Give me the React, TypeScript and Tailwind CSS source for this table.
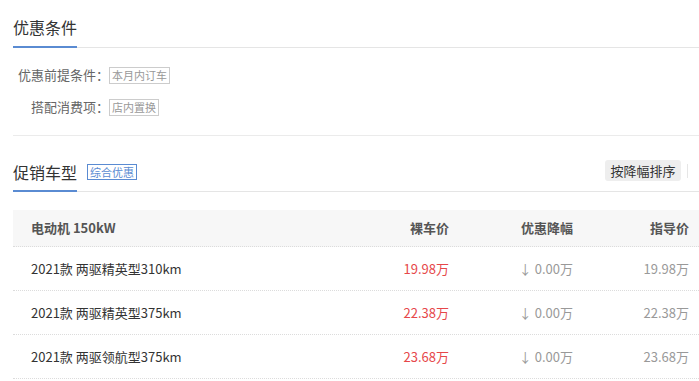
import React from "react";

const rows = [
  { name: "2021款 两驱精英型310km", price: "19.98万", cut: "0.00万", guide: "19.98万" },
  { name: "2021款 两驱精英型375km", price: "22.38万", cut: "0.00万", guide: "22.38万" },
  { name: "2021款 两驱领航型375km", price: "23.68万", cut: "0.00万", guide: "23.68万" },
];

export default function App() {
  return (
    <div
      className="w-[699px] h-[381px] overflow-hidden bg-white pl-[13px] text-[#333]"
      style={{ fontFamily: '"Noto Sans CJK SC", "Noto Sans", sans-serif' }}
    >
      {/* Section 1 */}
      <div className="flex h-[48px] items-end border-b border-[#e5e5e5]">
        <div className="-mb-px border-b-2 border-[#5a8bd2] pb-[7px] text-[16px] leading-[24px] text-[#333]">
          优惠条件
        </div>
      </div>
      <div className="flex flex-col pt-[11px] pb-[12px] text-[13px] text-[#666]">
        <div className="flex h-[32px] items-center">
          <div className="w-[96px] text-right">优惠前提条件：</div>
          <span className="border border-[#ccc] px-[2px] text-[11px] leading-[15px] text-[#999]">本月内订车</span>
        </div>
        <div className="flex h-[32px] items-center">
          <div className="w-[96px] text-right">搭配消费项：</div>
          <span className="border border-[#ccc] px-[2px] text-[11px] leading-[15px] text-[#999]">店内置换</span>
        </div>
      </div>
      <div className="h-px bg-[#ebebeb]" />

      {/* Section 2 */}
      <div className="flex h-[56px] items-end border-b border-[#e5e5e5]">
        <div className="-mb-px border-b-2 border-[#5a8bd2] pb-[6px] text-[16px] leading-[24px] text-[#333]">
          促销车型
        </div>
        <span className="mb-[11px] ml-[10px] border border-[#5a8bd2] px-[2px] text-[11px] leading-[14px] text-[#5a8bd2]">
          综合优惠
        </span>
        <div className="ml-auto mb-[10px] flex items-center">
          <span className="w-[76px] shrink-0 rounded-[3px] bg-[#eeeeee] text-center text-[13px] leading-[21px] text-[#333]">
            按降幅排序
          </span>
          <span className="ml-[6px] h-[14px] w-[12px] shrink-0 border-l border-[#e6e6e6]" />
        </div>
      </div>

      {/* Table */}
      <div className="mt-[18px]">
        <div className="flex h-[37px] items-center border-b border-dotted border-[#dcdcdc] bg-[#f7f7f7] pr-[10px] text-[13px] font-bold text-[#555]">
          <div className="flex-1 pl-[18px]">电动机 150kW</div>
          <div className="w-[120px] text-right">裸车价</div>
          <div className="w-[124px] text-right">优惠降幅</div>
          <div className="w-[116px] text-right">指导价</div>
        </div>
        {rows.map((r) => (
          <div
            key={r.name}
            className="flex h-[44px] items-center border-b border-dotted border-[#dcdcdc] pr-[10px] text-[13px]"
          >
            <div className="flex-1 pl-[18px] text-[#333]">{r.name}</div>
            <div className="w-[120px] text-right text-[#e6474a]">{r.price}</div>
            <div className="w-[124px] text-right text-[#999]">↓ {r.cut}</div>
            <div className="w-[116px] text-right text-[#999]">{r.guide}</div>
          </div>
        ))}
      </div>
    </div>
  );
}
